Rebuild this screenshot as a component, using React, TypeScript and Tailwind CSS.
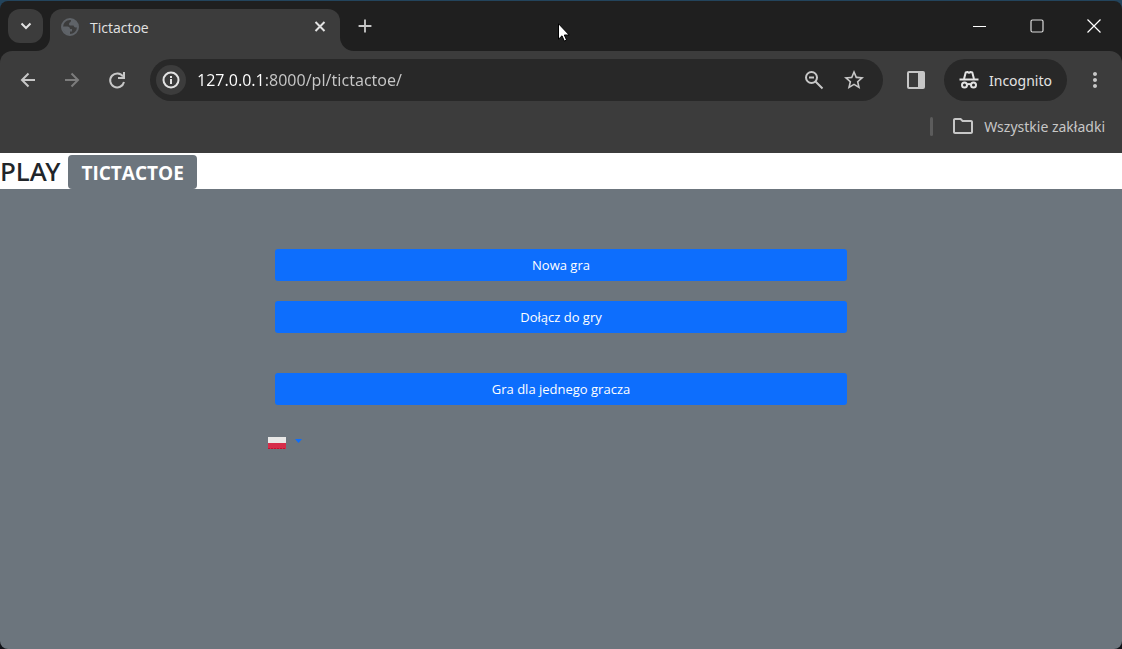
import type { ReactNode } from "react";
import { MdAdd, MdMoreVert, MdOutlineFolder, MdStarOutline } from "react-icons/md";

function IconButton({ label, className = "", children }: { label: string; className?: string; children: ReactNode }) {
  return (
    <button type="button" aria-label={label} className={`flex shrink-0 items-center justify-center ${className}`}>
      {children}
    </button>
  );
}

function LineIcon({ size, children }: { size: number; children: ReactNode }) {
  return (
    <svg width={size} height={size} viewBox={`0 0 ${size} ${size}`} fill="none" stroke="currentColor" strokeWidth="2">
      {children}
    </svg>
  );
}

function GlobeIcon() {
  return (
    <svg width="20" height="20" viewBox="0 0 20 20" fill="#5f6368">
      <circle cx="10" cy="10" r="8" fill="none" stroke="#5f6368" strokeWidth="2" />
      <path d="M11 2h2.500l3.500 4 .5 4.500h-2c-1 0-1.500-1-2-2h-3c-1 0-1.500-.5-1.500-1.500C9 5.500 10.500 5.500 11 4Z" />
      <path d="M2 9.500h5.500c1.500 0 2.500 1 2.500 2.500h2v2.500h-2V18l-4-1.500-3-3.500Z" />
    </svg>
  );
}

function TabStrip() {
  return (
    <div className="flex h-[50px] items-start rounded-t-lg bg-[#1f1f1f] pt-2 pl-2">
      <IconButton label="Search tabs" className="h-[34px] w-[35px] rounded-xl bg-[#3c3c3c] text-[#e3e3e3]">
        <svg width="12" height="8" viewBox="0 0 12 8" fill="none" stroke="currentColor" strokeWidth="2">
          <path d="M1.500 1.500 6 6l4.500-4.500" />
        </svg>
      </IconButton>
      <div className="relative ml-[7px] flex h-[42px] w-[290px] items-start rounded-t-xl bg-[#3c3c3c] pr-3 pl-[10px]">
        <svg className="absolute bottom-0 -left-[14px]" width="14" height="14" viewBox="0 0 14 14" fill="#3c3c3c">
          <path d="M14 0v14H0A14 14 0 0 0 14 0Z" />
        </svg>
        <svg className="absolute -right-[14px] bottom-0" width="14" height="14" viewBox="0 0 14 14" fill="#3c3c3c">
          <path d="M0 0v14h14A14 14 0 0 1 0 0Z" />
        </svg>
        <div className="flex h-9 flex-1 items-center">
          <GlobeIcon />
          <span className="ml-[10px] flex-1 text-[14px] text-[#e3e3e3]">Tictactoe</span>
          <IconButton label="Close tab" className="size-4 text-[#e3e3e3]">
            <LineIcon size={16}>
              <path d="m3.500 3 9 9m0-9-9 9" />
            </LineIcon>
          </IconButton>
        </div>
      </div>
      <IconButton label="New tab" className="ml-3 h-[34px] w-[26px] text-[#c7c7c7]">
        <MdAdd size={22} />
      </IconButton>
      <div className="ml-auto flex text-white">
        <IconButton label="Minimize" className="h-[34px] w-[57px]">
          <svg width="13" height="13" viewBox="0 0 13 13" fill="currentColor">
            <path d="M0 6h13v1H0z" />
          </svg>
        </IconButton>
        <IconButton label="Maximize" className="h-[34px] w-[57px]">
          <svg width="14" height="14" viewBox="0 0 14 14" fill="none" stroke="#dcdcdc" strokeWidth="1.200">
            <rect x="1" y="1" width="12" height="12" rx="1.500" />
          </svg>
        </IconButton>
        <IconButton label="Close window" className="h-[34px] w-[57px]">
          <svg width="14" height="14" viewBox="0 0 14 14" fill="none" stroke="currentColor" strokeWidth="1.200">
            <path d="m.5.5 13 13m0-13-13 13" />
          </svg>
        </IconButton>
      </div>
    </div>
  );
}

function IncognitoIcon() {
  return (
    <svg width="20" height="20" viewBox="0 0 20 20" fill="none" stroke="currentColor" strokeWidth="2">
      <path d="M.5 9.500h19" />
      <path d="M5 9 6.700 2.500 8.500 2l1.500.800L11.500 2l1.800.500L15 9" strokeLinejoin="round" />
      <circle cx="5.500" cy="15" r="2.500" />
      <circle cx="14.500" cy="15" r="2.500" />
      <path d="M8 14.500q2-1 4 0" />
    </svg>
  );
}

function Toolbar() {
  return (
    <div className="flex h-[50px] items-center pt-2 pr-[15px] pl-4 text-[#c7c7c7]">
      <IconButton label="Back" className="size-6">
        <LineIcon size={24}>
          <path d="M19 12H6m6.500-6.500L6 12l6.500 6.500" />
        </LineIcon>
      </IconButton>
      <IconButton label="Forward" className="ml-5 size-6 text-[#7c7c7c]">
        <LineIcon size={24}>
          <path d="M5 12h13m-6.500-6.500L18 12l-6.500 6.500" />
        </LineIcon>
      </IconButton>
      <IconButton label="Reload" className="ml-[21px] size-6">
        <LineIcon size={24}>
          <path d="M18 8.500A7 7 0 1 0 19 14" />
          <path d="M19 4v6h-6" />
        </LineIcon>
      </IconButton>
      <div className="ml-[21px] flex h-[42px] flex-1 items-center rounded-full bg-[#282828] pr-[17px] pl-[6px]">
        <IconButton label="Site information" className="size-[30px] rounded-full bg-[#3c3c3c] text-[#e3e3e3]">
          <LineIcon size={20}>
            <circle cx="10" cy="10" r="7.500" />
            <path d="M10 9v5m0-8v2" />
          </LineIcon>
        </IconButton>
        <input
          type="text"
          aria-label="Address"
          defaultValue="127.0.0.1:8000/pl/tictactoe/"
          className="ml-[11px] min-w-0 flex-1 bg-[linear-gradient(to_right,#ffffff_68px,#c7c7c7_68px)] bg-clip-text font-['Noto_Sans',sans-serif] text-[16px] text-transparent outline-none"
        />
        <IconButton label="Zoom" className="size-6">
          <LineIcon size={24}>
            <circle cx="9.500" cy="9.500" r="5.500" />
            <path d="m13.500 13.500 7 7M7 9.500h5" />
          </LineIcon>
        </IconButton>
        <IconButton label="Bookmark this page" className="ml-4 size-6">
          <MdStarOutline size={24} />
        </IconButton>
      </div>
      <IconButton label="Side panel" className="ml-[22px] size-[22px]">
        <svg width="18" height="18" viewBox="0 0 18 18">
          <rect x="1" y="1" width="16" height="16" rx="1" fill="none" stroke="currentColor" strokeWidth="2" />
          <path d="M11 1h6v16h-6z" fill="currentColor" />
        </svg>
      </IconButton>
      <button
        type="button"
        className="ml-[17px] flex h-[42px] w-[123px] shrink-0 items-center gap-[10px] rounded-full bg-[#282828] pl-[15px] font-['Noto_Sans',sans-serif] text-[14px] text-[#e3e3e3]"
      >
        <IncognitoIcon />
        Incognito
      </button>
      <IconButton label="Menu" className="ml-4 size-6">
        <MdMoreVert size={24} />
      </IconButton>
    </div>
  );
}

function BookmarksBar() {
  return (
    <div className="flex h-[52px] items-center justify-end pr-[17px] pb-0.5 text-[#c7c7c7]">
      <span className="h-[19px] w-[3px] rounded-full bg-[#5c5c5c]" />
      <button type="button" className="ml-[18px] flex items-center gap-[9px] font-['Noto_Sans',sans-serif] text-[14px]">
        <MdOutlineFolder size={24} />
        Wszystkie zakładki
      </button>
    </div>
  );
}

function MenuButton({ children }: { children: ReactNode }) {
  return (
    <button type="button" className="h-8 w-full rounded-[3px] bg-[#0d6efd] pt-0.5 text-[13px] text-white">
      {children}
    </button>
  );
}

function Page() {
  return (
    <main className="flex flex-1 flex-col overflow-hidden rounded-b-lg bg-[#6c757d]">
      <header className="flex h-9 items-end gap-2 bg-white text-[#212529]">
        <span className="font-['Noto_Sans',sans-serif] text-[26px] leading-9 font-medium">PLAY</span>
        <a
          href="#tictactoe"
          className="flex h-[34px] items-center rounded-[4px] bg-[#6c757d] px-[13px] pt-0.5 text-[19px] font-bold text-white"
        >
          TICTACTOE
        </a>
      </header>
      <div className="mx-auto mt-[60px] w-[51%]">
        <div className="flex flex-col gap-5">
          <MenuButton>Nowa gra</MenuButton>
          <MenuButton>Dołącz do gry</MenuButton>
        </div>
        <div className="mt-10">
          <MenuButton>Gra dla jednego gracza</MenuButton>
        </div>
        <button type="button" aria-label="Polski" className="mt-8 -ml-[7px] flex items-start gap-[9px]">
          <svg width="18" height="12" viewBox="0 0 18 12">
            <path d="M0 0h18v6H0z" fill="#e9e8e7" />
            <path d="M0 6h18v6H0z" fill="#d62d4a" />
            <path d="M0 11.500h18" stroke="#c4122f" strokeDasharray="2 1" />
          </svg>
          <svg className="mt-0.5" width="7" height="4" viewBox="0 0 7 4" fill="#0d6efd">
            <path d="M0 0h7L3.500 4z" />
          </svg>
        </button>
      </div>
    </main>
  );
}

export default function App() {
  return (
    <div className="flex min-h-screen flex-col bg-[#111318] font-['Open_Sans','Noto_Sans',sans-serif]">
      <div className="bg-[#23445c] pt-px">
        <TabStrip />
      </div>
      <div className="bg-[#1f1f1f]">
        <div className="rounded-t-xl bg-[#3c3c3c]">
          <Toolbar />
          <BookmarksBar />
        </div>
      </div>
      <Page />
      <svg className="absolute top-[23px] left-[558px]" width="12" height="19" viewBox="0 0 12 19" fill="#fff" stroke="#000" strokeWidth="1">
        <path d="M.5.700v15.500l3.500-3.400 2.300 5.300 2.300-1-2.300-5.100h4.900z" />
      </svg>
    </div>
  );
}
